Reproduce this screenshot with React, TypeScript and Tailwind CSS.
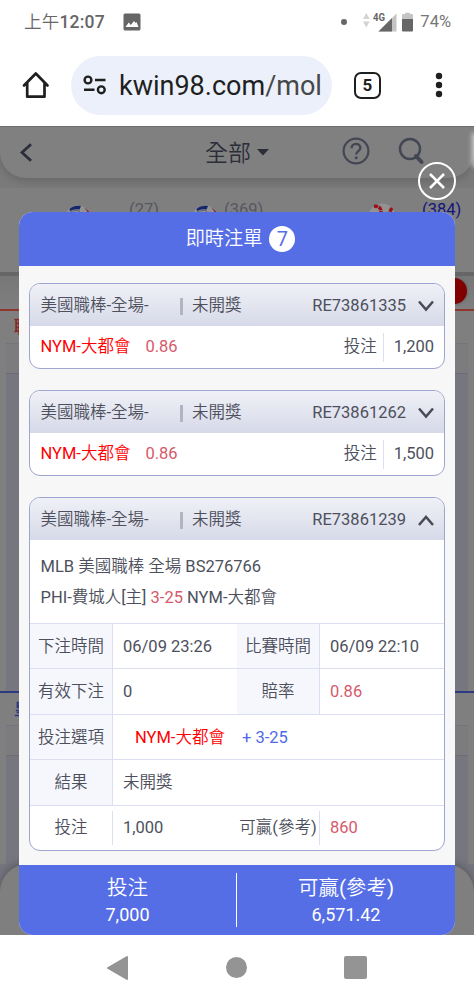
import type { ReactNode } from "react";

type Bet = {
  id: string;
  league: string;
  status: string;
  team: string;
  odds: string;
  stake: string;
  open?: boolean;
};

const BETS: Bet[] = [
  { id: "RE73861335", league: "美國職棒-全場-", status: "未開獎", team: "NYM-大都會", odds: "0.86", stake: "1,200" },
  { id: "RE73861262", league: "美國職棒-全場-", status: "未開獎", team: "NYM-大都會", odds: "0.86", stake: "1,500" },
  { id: "RE73861239", league: "美國職棒-全場-", status: "未開獎", team: "NYM-大都會", odds: "0.86", stake: "1,000", open: true },
];

function StatusBar() {
  return (
    <div className="flex h-11 shrink-0 items-center pl-6 pr-[23px] text-[#666]">
      <span className="pt-px text-[17.5px] leading-none tracking-[0.2px]">
        <span className="font-light">上午</span>
        <span className="font-medium">12:07</span>
      </span>
      <svg className="ml-[18px]" width="18" height="18" viewBox="0 0 18 18">
        <rect x="0.5" y="0.5" width="17" height="17" rx="1.6" fill="#666" />
        <path d="M2.5 14 5.800 9.500l2 2.600L11 8l1.500 2 1-1 2 5z" fill="#fff" />
      </svg>
      <span className="ml-auto h-1.5 w-1.5 rounded-full bg-[#666]" />
      <svg className="mb-[2px] ml-[15px]" width="54" height="22" viewBox="0 0 54 22">
        <path d="M1 9 4.300 3 7.600 9zM1 11.500h6.600L4.300 17.500z" fill="#d4d4d4" />
        <path d="M16.500 21.500 34.500 3.500v18z" fill="#c4c4c4" />
        <path d="M16.500 21.500 30 8V21.500z" fill="#666" />
        <text x="11" y="10.500" fontSize="10.500" fontWeight="700" fill="#666" textLength="12" lengthAdjust="spacingAndGlyphs">4G</text>
        <path d="M40 9V5a1 1 0 0 1 1-1h2.200V2.700h4.600V4H50a1 1 0 0 1 1 1V9z" fill="#c4c4c4" />
        <path d="M40 9h11v11.500a1 1 0 0 1-1 1h-9a1 1 0 0 1-1-1z" fill="#666" />
      </svg>
      <span className="ml-1 pt-px text-[16.5px] leading-none text-[#777]">74%</span>
    </div>
  );
}

function AddressBar() {
  return (
    <div className="flex h-[82px] shrink-0 items-center pl-[22px] pr-[31px] text-[#1f1f1f]">
      <svg width="28" height="28" viewBox="0 0 28 28" fill="none" stroke="currentColor" strokeWidth="2.700" strokeLinejoin="round" strokeLinecap="round">
        <path d="M2 14.500 13.800 2.500 25.500 14.500M5.200 12V25.700H22.500V12" />
      </svg>
      <div className="ml-[21px] flex h-[59px] w-[261px] items-center overflow-hidden rounded-full bg-[#ebf0fa] pl-[12px]">
        <svg width="24" height="20" viewBox="0 0 24 20" fill="none" stroke="currentColor" strokeWidth="2.400">
          <circle cx="5" cy="5" r="3.400" />
          <path d="M12 5h10.500M1 14.800h10.500" />
          <circle cx="18.300" cy="14.800" r="3.400" />
        </svg>
        <span className="ml-3 whitespace-nowrap pt-[3px] text-[27px] leading-none">
          kwin98.com<span className="text-[#474747]">/mol</span>
        </span>
      </div>
      <span className="ml-[22px] flex h-[27px] w-[27px] items-center justify-center rounded-[7px] border-[2.6px] border-[#1f1f1f] text-[17px] font-bold leading-none">
        5
      </span>
      <svg className="ml-auto" width="8" height="26" viewBox="0 0 8 26" fill="currentColor">
        <circle cx="4" cy="4" r="3.200" />
        <circle cx="4" cy="13" r="3.200" />
        <circle cx="4" cy="22" r="3.200" />
      </svg>
    </div>
  );
}

function Ball({ tone }: { tone: "blue" | "red" }) {
  return (
    <svg width="28" height="28" viewBox="0 0 28 28">
      <circle cx="14" cy="14" r="13.500" fill="#929292" />
      {tone === "blue" ? (
        <g>
          <path d="M5.500 4Q10 .2 17 1L15.500 4.500Q10 3.500 6 6z" fill="#14266b" />
          <path d="M20 2.500Q25 5 27 10L24.500 9Q23 5 20 2.500z" fill="#85202b" />
          <path d="M3 9Q8 5 15 5l1 8" fill="none" stroke="#606068" />
        </g>
      ) : (
        <path d="M6 3.500Q14 2 13 12M24 5Q20 10 24 14" fill="none" stroke="#9a1118" strokeWidth="3.500" strokeDasharray="4 .8" />
      )}
    </svg>
  );
}

function BoardSection({ line, mark, height }: { line: string; mark: string; height: string }) {
  return (
    <div>
      <div className={`flex h-[34px] items-start border-t-2 pl-3.5 pt-2 text-[17px] font-bold leading-none ${line}`}>{mark}</div>
      <div className={`mx-[6px] flex flex-col border-t border-[#74747f] ${height}`}>
        <div className="h-[30px] border-b border-[#6c6c78] bg-[#7c7c7f]" />
        <div className="flex-1 bg-[#76767f]" />
      </div>
    </div>
  );
}

// Page that sits dimmed behind the slip
function Backdrop() {
  return (
    <div className="flex h-full flex-col bg-[#7f7f7f]">
      <div className="h-[61px] shrink-0 bg-[#7a7a7a]">
        <div className="flex h-[51px] items-center rounded-b-[26px] bg-[#808080] pl-[19px] shadow-[0_3px_8px_rgba(0,0,0,0.16)]">
          <svg width="14" height="20" viewBox="0 0 14 20" fill="none" stroke="#2b2e38" strokeWidth="2.800">
            <path d="M12 1.200 3 9.500l9 8.300" />
          </svg>
          <span className="ml-[172px] pt-px text-[23px] leading-none text-[#2b2e38]">全部</span>
          <svg className="ml-1.5" width="12" height="7" viewBox="0 0 12 7"><path d="M0 0h12L6 6.500z" fill="#2b2e38" /></svg>
          <svg className="-mt-[3px] ml-[73px]" width="28" height="28" viewBox="0 0 28 28" fill="none" stroke="#434754" strokeWidth="2.200">
            <circle cx="14" cy="14" r="12.400" />
            <path d="M9.600 11.200c0-5.700 8.800-5.700 8.800-.4 0 3.200-4.200 3.500-4.200 6.700" strokeWidth="2.400" />
            <circle cx="14.200" cy="20.700" r="1.500" fill="#434754" stroke="none" />
          </svg>
          <svg className="-mt-[3px] ml-[28px]" width="28" height="28" viewBox="0 0 28 28" fill="none" stroke="#434754">
            <circle cx="12" cy="12" r="10" strokeWidth="2.500" />
            <path d="m18 19 5.500 6" strokeWidth="4" strokeLinecap="round" />
          </svg>
        </div>
      </div>
      <div className="flex h-[84px] shrink-0 items-start pl-[64px] pt-[14px] text-[16.5px] leading-none text-[#555762]">
        <div className="mt-[3px]"><Ball tone="blue" /></div>
        <span className="ml-[37px] w-[30px]">(27)</span>
        <div className="ml-[32px] mt-[3px]"><Ball tone="blue" /></div>
        <span className="ml-[5px] w-[40px]">(369)</span>
        <div className="ml-[104px] mt-px"><Ball tone="red" /></div>
        <span className="ml-[26px] text-[#10157c]">(384)</span>
      </div>
      <div className="h-1 shrink-0 bg-[#666]" />
      <div className="flex h-[33px] shrink-0 items-center justify-end bg-gradient-to-b from-[#777] to-[#7f7f7f] pr-[7px]">
        <span className="mb-1 h-[26px] w-[26px] rounded-full bg-[#800000] shadow-[0_0_3px_#555]" />
      </div>
      <BoardSection line="border-[#8e352e] text-[#8b2626]" mark="聯" height="h-[348px]" />
      <BoardSection line="border-[#2c3b80] text-[#27387f]" mark="皇" height="h-[139px]" />
      <div className="min-h-0 flex-1 bg-[#75757f]">
        <div className="h-full rounded-t-[28px] bg-[#7f7f7f] shadow-[0_-2px_8px_rgba(0,0,0,0.25)]" />
      </div>
    </div>
  );
}

function Chevron({ up }: { up?: boolean }) {
  return (
    <svg className="ml-[12px]" width="16" height="12" viewBox="0 0 16 12" fill="none" stroke="#494c57" strokeWidth="2.500">
      <path d={up ? "M1 11 8 3l7 8" : "M1 1.500 8 9.500l7-8"} />
    </svg>
  );
}

function Label({ children, plain }: { children: ReactNode; plain?: boolean }) {
  return (
    <div className={`flex w-[83px] shrink-0 items-center justify-center whitespace-nowrap border-r border-[#dcdff3] ${plain ? "my-[5px]" : "bg-[#f6f7fc]"}`}>
      <span className="pt-[2px]">{children}</span>
    </div>
  );
}

function Row({ children }: { children: ReactNode }) {
  return <div className="flex min-h-0 flex-1 border-t border-[#dcdff3]">{children}</div>;
}

function BetDetail({ bet }: { bet: Bet }) {
  return (
    <>
      <div className="flex h-[83px] shrink-0 flex-col justify-center gap-[7px] pl-[10.5px] pt-px">
        <p className="leading-6">MLB 美國職棒 全場 BS276766</p>
        <p className="leading-6">PHI-費城人[主] <span className="text-[#d65a6c]">3-25</span> NYM-大都會</p>
      </div>
      <Row>
        <Label>下注時間</Label>
        <div className="flex w-[124px] items-center pl-[10px] pt-[2px]">06/09 23:26</div>
        <Label>比賽時間</Label>
        <div className="flex items-center pl-[10px] pt-[2px]">06/09 22:10</div>
      </Row>
      <Row>
        <Label>有效下注</Label>
        <div className="flex w-[124px] items-center pl-[10px] pt-[2px]">0</div>
        <Label>賠率</Label>
        <div className="flex items-center pl-[10px] pt-[2px] text-[#d65a6c]">{bet.odds}</div>
      </Row>
      <Row>
        <Label>投注選項</Label>
        <div className="flex items-center pl-[22px] pt-[2px]">
          <span className="text-[#ff0000]">{bet.team}</span>
          <span className="ml-[17px] text-[#5069e8]">+ 3-25</span>
        </div>
      </Row>
      <Row>
        <Label>結果</Label>
        <div className="flex items-center pl-[10px] pt-[2px]">{bet.status}</div>
      </Row>
      <Row>
        <Label plain>投注</Label>
        <div className="flex w-[124px] items-center pl-[10px] pt-[2px]">{bet.stake}</div>
        <Label plain>可贏(參考)</Label>
        <div className="flex items-center pl-[10px] pt-[2px] text-[#d65a6c]">860</div>
      </Row>
    </>
  );
}

function BetCard({ bet }: { bet: Bet }) {
  return (
    <div className={`flex shrink-0 flex-col overflow-hidden rounded-[11px] border border-[#9da5d0] bg-white ${bet.open ? "h-[354px]" : "h-[86px]"}`}>
      <div className="flex h-[42px] shrink-0 items-center bg-gradient-to-b from-[#f0f1f7] to-[#d6d9e8] pl-[10.5px] pr-[10px] pt-[2px]">
        <span className="w-[139.500px]">{bet.league}</span>
        <span className="h-[17px] w-[3px] bg-[#b2b4c4]" />
        <span className="ml-[9px]">{bet.status}</span>
        <span className="ml-auto">{bet.id}</span>
        <Chevron up={bet.open} />
      </div>
      {bet.open ? (
        <BetDetail bet={bet} />
      ) : (
        <div className="flex flex-1 items-center pl-[10.5px] pr-[10px]">
          <span className="text-[#ff0000]">{bet.team}</span>
          <span className="ml-[15px] text-[#d65a6c]">{bet.odds}</span>
          <span className="ml-auto">投注</span>
          <span className="ml-[6px] h-[29px] w-px bg-[#dcdff3]" />
          <span className="ml-[10px]">{bet.stake}</span>
        </div>
      )}
    </div>
  );
}

function BetSlip() {
  return (
    <div className="flex h-[723px] w-[436px] flex-col overflow-hidden rounded-[14px] bg-[#f7f7f7]">
      <div className="flex h-[54px] shrink-0 items-center justify-center gap-[7px] bg-[#556ee6] pl-[7px] text-[19.2px] text-white">
        <span>即時注單</span>
        <span className="flex h-[26px] w-[26px] items-center justify-center rounded-full bg-white text-[20px] leading-none text-[#556ee6]">7</span>
      </div>
      <div className="flex min-h-0 flex-1 flex-col gap-[21px] pl-[10px] pr-[10px] pt-[17px] text-[16.5px] text-[#4d505c]">
        {BETS.map((bet) => <BetCard key={bet.id} bet={bet} />)}
      </div>
      <div className="flex h-[70px] shrink-0 items-center bg-[#556ee6] text-center text-white">
        <div className="w-[217px] pt-[3px]">
          <div className="text-[20.5px] leading-[27px]">投注</div>
          <div className="text-[18px] leading-[26px]">7,000</div>
        </div>
        <div className="h-[54px] w-px bg-white" />
        <div className="flex-1 pt-[3px]">
          <div className="text-[20.5px] leading-[27px]">可贏(參考)</div>
          <div className="text-[18px] leading-[26px]">6,571.42</div>
        </div>
      </div>
    </div>
  );
}

function NavBar() {
  return (
    <div className="flex h-[65px] shrink-0 items-center justify-between bg-white pl-[106px] pr-[107px]">
      <svg width="23" height="26" viewBox="0 0 23 26"><path d="M21 2v22L2 13z" fill="#949494" stroke="#949494" strokeWidth="2" strokeLinejoin="round" /></svg>
      <span className="h-[21px] w-[21px] rounded-full bg-[#949494]" />
      <span className="h-[23px] w-[23px] rounded-[2px] bg-[#949494]" />
    </div>
  );
}

export default function App() {
  return (
    <div className="flex h-[1000px] w-[474px] flex-col overflow-hidden bg-white font-['Roboto','Noto_Sans_CJK_TC_DemiLight','Noto_Sans_CJK_TC',sans-serif]">
      <StatusBar />
      <AddressBar />
      <main className="relative h-[809px] shrink-0 overflow-hidden border-t border-[#6f6f6f]">
        <Backdrop />
        {/* edge handle glow */}
        <div className="absolute left-[474px] top-[8px] h-[30px] w-2 shadow-[0_0_5px_2px_rgba(255,255,255,0.6)]" />
        <div className="absolute left-[19px] top-[85px]"><BetSlip /></div>
        <button className="absolute left-[418px] top-[35px] flex h-[38px] w-[38px] items-center justify-center rounded-full border-[2.5px] border-white">
          <svg width="18" height="18" viewBox="0 0 18 18" stroke="#fff" strokeWidth="2.500"><path d="m2 2 14 14M16 2 2 16" /></svg>
        </button>
      </main>
      <NavBar />
    </div>
  );
}
